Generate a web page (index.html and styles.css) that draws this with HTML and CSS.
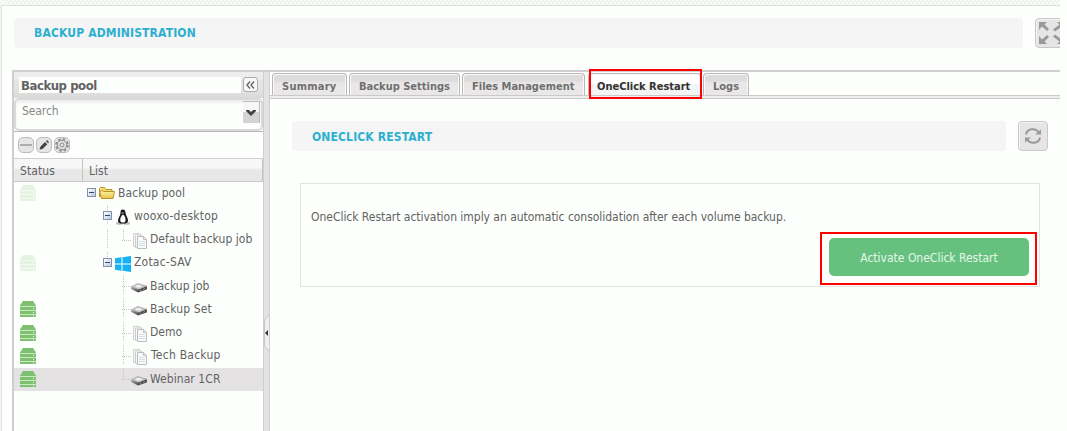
FILE: index.html
```html
<!DOCTYPE html>
<html lang="en">
<head>
<meta charset="utf-8">
<title>Backup administration</title>
<link rel="stylesheet" href="styles.css">
</head>
<body>
<svg class="defs" aria-hidden="true">
  <defs>
    <linearGradient id="fold" x2="0" y2="1"><stop offset="0" stop-color="#fff6a8"/><stop offset="1" stop-color="#e8c447"/></linearGradient>
    <linearGradient id="metal"><stop offset="0" stop-color="#aaa"/><stop offset=".45" stop-color="#555"/><stop offset="1" stop-color="#777"/></linearGradient>
  </defs>
  <symbol id="server" viewBox="0 0 16 16"><path fill="#7cc070" d="M3 0h10l3 4.500V16H0V4.500z"/><path stroke="#d5edcf" d="M0 5.500h16M0 9.500h16M0 13.500h16" stroke-width=".9"/><path fill="#f4fff0" d="M13 7h1v1h-1zM13 11h1v1h-1zM13 14.500h1v1h-1z"/></symbol>
  <symbol id="drive" viewBox="0 0 16 12"><path fill="url(#metal)" d="M0 5v2l7 3.500 9-3V4L9 7z"/><path fill="#c4c4c4" stroke="#9a9a9a" stroke-width=".6" d="M.5 4.800 6.500 1.500 15.500 4 8 7.800z"/><ellipse cx="7.500" cy="4.200" rx="3.200" ry="1.300" fill="#efefef"/><path fill="#444" d="m7 8 8.500-3.500V7L7 10z"/><path stroke="#aaa" d="m8.500 8.800 2-.9M12 7.300l2-.9" stroke-width=".8"/></symbol>
  <symbol id="pages" viewBox="0 0 16 16"><path fill="#f7f7f7" stroke="#d2d2d2" d="M1.500.5h6l2 2v11h-8z"/><path fill="#f7f7f7" stroke="#cdcdcd" d="M3.500 2h6l2 2v10.500h-8z"/><path fill="#f9f9f9" stroke="#bdbdbd" d="M5.500 3.500h6l3 3v9h-9z"/><path fill="none" stroke="#c0c0c0" d="M11.500 3.500v3h3"/><path stroke="#d2e2ed" d="M7 8.500h6M7 10.500h6M7 12.500h6"/></symbol>
</svg>
<main class="page">
  <header class="headline">
    <h1 class="title-bar title-main"><span class="t-admin">BACKUP ADMINISTRATION</span></h1>
    <button class="icon-button expand" aria-label="Expand"><svg width="26" height="22" viewBox="0 0 26 22"><path fill="#999" d="M0 0h8L5.500 2.500 10 7 8 9 3 4.500 0 8zM26 0h-8l2.500 2.500L14 7.500l2 2 6.500-5L26 8zM0 22h8l-2.500-2.500L10 15l-2-2-5 4.500L0 14zM26 22h-8l2.500-2.500-6.500-5 2-2 6.500 5L26 14z"/></svg></button>
  </header>
  <div class="workspace">
    <aside class="sidebar">
      <div class="side-head"><h2 class="side-title"><span class="t-pool">Backup pool</span></h2><button class="collapse" aria-label="Collapse"><svg width="9" height="8" viewBox="0 0 9 8"><path d="M4 .5 1 4l3 3.500M8 .5 5 4l3 3.500" fill="none" stroke="#666" stroke-width="1.400"/></svg></button></div>
      <div class="search"><span class="t-search">Search</span><button class="drop" aria-label="Show list"><svg width="10" height="6" viewBox="0 0 10 6"><path d="M0 0h3l2 2 2-2h3v1L5 6 0 1z" fill="#444"/></svg></button></div>
      <div class="tools">
        <button class="tool" aria-label="Remove"><svg width="12" height="12"><path d="M0 6h12" stroke="#888" stroke-width="1.200"/></svg></button>
        <button class="tool" aria-label="Edit"><svg width="12" height="12" viewBox="0 0 12 12"><path d="m1.500 10.500 1-3L7 3l2.300 2.300L4.500 10zM8 2l1-1 2 2.300-1 1z" fill="#444"/></svg></button>
        <button class="tool" aria-label="Settings"><svg width="14" height="14" viewBox="0 0 14 14"><g fill="none" stroke="#888"><circle cx="7" cy="7" r="6" stroke-width="1.500" stroke-dasharray="2.600 2.112"/><circle cx="7" cy="7" r="4.700"/><circle cx="7" cy="7" r="2"/></g></svg></button>
      </div>
      <div class="columns"><span class="col-status"><span class="t-status">Status</span></span><span class="col-list"><span class="t-list">List</span></span></div>
      <ul class="tree">
        <li class="row root"><svg class="server faded"><use href="#server"/></svg><i class="toggle"></i><svg class="folder" width="16" height="14" viewBox="0 0 16 14"><path d="M.5 11V2.500l1-1h4l1.500 2h6v2" fill="#f5dd78" stroke="#b8912a"/><path d="m2.500 12.500-2-7 3.500-1 .5 1h11l-1.500 7z" fill="url(#fold)" stroke="#b8912a"/></svg><span class="n-pool">Backup pool</span></li>
        <li class="row host top-host"><i class="toggle"></i><svg class="os" width="16" height="16" viewBox="0 0 16 16"><ellipse cx="4.500" cy="14.200" rx="3.500" ry="1.500" fill="#bbb"/><ellipse cx="11.500" cy="14.200" rx="3.500" ry="1.500" fill="#bbb"/><path d="M5.500 4C5.500 1.500 6 .5 7.800.5s2.700 1.200 2.700 3.500c0 2 2.500 4.500 2.500 7.500 0 2-1.500 2.500-2.500 3h-5c-1.500-.5-2.500-1-2.500-3C3 9 5.500 6.500 5.500 4z" fill="#171717"/><path d="M8 5.500C6.500 6.500 4.800 9 5.300 12c.5 2 4.700 2 5.200 0 .5-3-1-5.500-2.500-6.500z" fill="#fff"/><path d="M6.500 3.500h2v1h-2z" fill="#ddd"/></svg><span class="n-wooxo">wooxo-desktop</span></li>
        <li class="row job last"><svg class="pages"><use href="#pages"/></svg><span class="n-default">Default backup job</span></li>
        <li class="row host end-host"><svg class="server faded"><use href="#server"/></svg><i class="toggle"></i><svg class="os" width="16" height="16" viewBox="0 0 16 16"><path fill="#14b2f2" d="m0 2.200 6.500-.9v6.200H0zM7.500 1.200 16 0v7.500H7.500zM0 8.500h6.500v6.200L0 13.800zM7.500 8.500H16V16l-8.500-1.200z"/></svg><span class="n-zotac">Zotac-SAV</span></li>
        <li class="row job"><svg class="drive"><use href="#drive"/></svg><span class="n-job">Backup job</span></li>
        <li class="row job"><svg class="server"><use href="#server"/></svg><svg class="drive"><use href="#drive"/></svg><span class="n-set">Backup Set</span></li>
        <li class="row job"><svg class="server"><use href="#server"/></svg><svg class="pages"><use href="#pages"/></svg><span class="n-demo">Demo</span></li>
        <li class="row job"><svg class="server"><use href="#server"/></svg><svg class="pages"><use href="#pages"/></svg><span class="n-tech">Tech Backup</span></li>
        <li class="row job last selected"><svg class="server"><use href="#server"/></svg><svg class="drive"><use href="#drive"/></svg><span class="n-web">Webinar 1CR</span></li>
      </ul>
    </aside>
    <div class="splitter"><svg class="grip" width="5" height="36" viewBox="0 0 5 36"><path d="M5 0 .5 5v26L5 36" fill="#f0eff0" stroke="#cbc7c9"/><path d="m1 18 3-3v6z" fill="#333"/></svg></div>
    <section class="content">
      <nav class="tabs">
        <a class="tab tab-summary"><span class="t-summary">Summary</span></a>
        <a class="tab tab-settings"><span class="t-settings">Backup Settings</span></a>
        <a class="tab tab-files"><span class="t-files">Files Management</span></a>
        <a class="tab tab-restart active"><span class="t-restart">OneClick Restart</span><i class="mark mark-tab"></i></a>
        <a class="tab tab-logs"><span class="t-logs">Logs</span></a>
      </nav>
      <div class="tab-strip"></div>
      <header class="subhead">
        <h2 class="title-bar title-sub"><span class="t-one">ONECLICK RESTART</span></h2>
        <button class="icon-button" aria-label="Refresh"><svg width="18" height="18" viewBox="0 0 18 18"><g fill="none" stroke="#999" stroke-width="2"><path d="M2 7.500c1-6 9-7 12.500-2.500M16 10.500c-1 6-9 7-12.500 2.500"/></g><path fill="#999" d="M17 2.500v5h-6zM1 15.500v-5h6z"/></svg></button>
      </header>
      <div class="notice">
        <p class="message"><span class="t-message">OneClick Restart activation imply an automatic consolidation after each volume backup.</span></p>
        <button class="activate"><span class="t-activate">Activate OneClick Restart</span><i class="mark mark-action"></i></button>
      </div>
    </section>
  </div>
</main>
</body>
</html>
```
FILE: styles.css
```css
* { box-sizing: border-box; }
body { margin: 0; width: 1067px; height: 431px; overflow: hidden; background: #fdfffd; color: #626262; font: 12px/16px "DejaVu Sans Condensed", "DejaVu Sans", sans-serif; font-stretch: condensed; }
button { margin: 0; padding: 0; font: inherit; }
h1, h2, p, ul { margin: 0; padding: 0; font: inherit; }
span { white-space: nowrap; }
.defs { display: block; width: 0; height: 0; }
.page { width: 1060px; height: 431px; overflow: hidden; padding: 5px 0 0 1px; background: repeating-conic-gradient(#f0f2f0 0 25%, #fafcfa 0 50%) 0 0 / 4px 4px; }
.page::before { content: ""; display: block; height: 1px; background: #e2e2e2; }
.headline { display: flex; gap: 12px; width: 1060px; padding: 12px 0 0 12px; border-left: 1px solid #e2e2e2; background: #fdfffd; }
.title-bar { display: flex; align-items: center; height: 30px; padding-left: 20px; border-radius: 4px; background: #f4f5f4; color: #2dafd0; font-weight: bold; }
.title-main { width: 1009px; flex: none; }
.t-admin { letter-spacing: .15px; }
.t-one { letter-spacing: .15px; }
.title-sub .t-one { padding-top: 1px; }
.icon-button { display: flex; align-items: center; justify-content: center; flex: none; width: 30px; height: 30px; border: 1px solid #c9c8c9; border-radius: 4px; background: #e6e4e5; box-shadow: inset 1px 1px #f5f4f5; }
.expand { width: 34px; }
.workspace { display: flex; height: 383px; padding: 22px 0 0 10px; border-left: 1px solid #e2e2e2; background: #fdfffd; }
.sidebar { width: 251px; flex: none; border-top: 2px solid #d1cfd1; border-left: 2px solid #d0cdd0; }
.side-head { display: flex; gap: 2px; height: 26px; padding: 5px; background: linear-gradient(#ededed 0 30%, #e5e4e5 30% 60%, #dad9da); }
.side-title { display: flex; align-items: center; width: 222px; height: 16px; padding: 1px 0 0 2px; background: #fdfffd; font-size: 13px; font-weight: bold; letter-spacing: -.45px; }
.collapse { display: grid; place-items: center; width: 15px; height: 15px; border: 1px solid #aaa; border-radius: 3px; background: #f8f8f8; }
.search { display: flex; justify-content: space-between; height: 33px; padding: 1px 1px 0 6px; border: 2px solid #d9d9d9; border-radius: 5px; background: #fdfffd; color: #888; box-shadow: inset 0 3px 3px #eee; }
.t-search { padding-top: 2px; letter-spacing: -.1px; }
.drop { display: grid; place-items: center; width: 17px; height: 22px; border: solid #bbb; border-width: 1px 1px 0 0; background: linear-gradient(#f7f7f7 0 45%, #d6d3d5 50%); }
.tools { display: flex; gap: 2px; height: 28px; padding: 5px 4px; border-top: 1px solid #b8b8b8; border-bottom: 1px solid #d0d0d0; }
.tool { display: grid; place-items: center; width: 16px; height: 16px; border: 1px solid #bbb; border-radius: 5px; background: #e6e4e5; }
.columns { display: flex; height: 23px; line-height: 24px; border-bottom: 1px solid #c8c8c8; background: linear-gradient(#f6f7f6 0 40%, #e9e8e9 50%); }
.col-status { width: 69px; padding-left: 6px; border-right: 1px solid #c3c3c3; }
.col-list { flex: 1; padding-left: 6px; border-right: 1px solid #c3c3c3; }
.t-status { letter-spacing: .1px; }
.tree { list-style: none; }
.row { display: grid; grid-template-columns: 73px 12px 16px 1fr; align-items: center; height: 23.250px; }
.row > span { grid-column: 4; grid-row: 1; padding: 0 0 2px 2px; }
.row > svg, .row > .toggle { grid-row: 1; }
.host { grid-template-columns: 89px 12px 16px 1fr; }
.job { grid-template-columns: 108px 10px 16px 1fr; }
.root > span, .host > span { padding-left: 3px; }
.n-pool { letter-spacing: .1px; }
.n-wooxo { letter-spacing: .2px; }
.n-default { letter-spacing: .03px; }
.n-zotac { letter-spacing: .2px; }
.n-set { letter-spacing: .12px; }
.row > .n-tech { padding-left: 3px; letter-spacing: .25px; }
.n-web { letter-spacing: .07px; }
.row > .server { grid-column: 1; width: 16px; height: 16px; margin: -1px 0 0 6px; }
.faded { opacity: .18; }
.toggle { grid-column: 2; width: 9px; height: 9px; margin-top: -2px; border: 1px solid #8292b0; background: linear-gradient(#30486f, #30486f) center / 5px 1px no-repeat, linear-gradient(135deg, #fff, #bdc8dc); }
.folder, .os { grid-column: 3; }
.folder { margin-top: -1px; }
.os { margin-top: 1px; }
.job::before { content: ""; grid-column: 2; grid-row: 1; height: 1px; background: repeating-linear-gradient(90deg, #c5c5c5 0 1px, transparent 1px 2px); }
.job { background: repeating-linear-gradient(#c5c5c5 0 1px, transparent 1px 2px) 109px 0 / 1px 19px no-repeat; }
.last { background-size: 1px 11px; }
.top-host { background: repeating-linear-gradient(#c5c5c5 0 1px, transparent 1px 2px) 93px 0 / 1px 19px no-repeat; }
.top-host + .last { background: repeating-linear-gradient(#c5c5c5 0 1px, transparent 1px 2px) 93px 0 / 1px 19px no-repeat, repeating-linear-gradient(#c5c5c5 0 1px, transparent 1px 2px) 109px 0 / 1px 11px no-repeat; }
.end-host { background: repeating-linear-gradient(#c5c5c5 0 1px, transparent 1px 2px) 93px 0 / 1px 11px no-repeat; }
.pages, .drive { grid-column: 3; width: 16px; height: 16px; }
.pages { margin-top: 1px; }
.drive { width: 18px; height: 12px; margin: 3px 0 0 -2px; }
.selected { background-color: #e5e2e4; }
.splitter { display: flex; align-items: flex-start; justify-content: flex-end; width: 7px; flex: none; padding-top: 243px; border: solid #d0cdd0; border-width: 2px 1px 0; background: #e5e2e4; }
.content { flex: 1; min-width: 0; border-top: 2px solid #d1cfd1; }
.tabs { display: flex; gap: 2px; height: 23px; padding: 1px 0 0 2px; }
.tab { position: relative; display: flex; align-items: center; height: 22px; padding: 4px 0 0 9px; flex: none; border: 1px solid #b9b7b8; border-bottom: 0; border-radius: 4px 4px 0 0; background: linear-gradient(#dddbdc 0 30%, #e9e7e8 45%); color: #6f6f6f; font-size: 11px; font-weight: bold; box-shadow: inset 1px 1px #fafafa, inset -1px 0 #fafafa; }
.tab-summary { width: 75px; }
.t-summary { letter-spacing: .25px; }
.tab-settings { width: 111px; }
.tab-files { width: 123px; }
.tab-restart { width: 113px; margin-left: 1px; padding-left: 8px; }
.tab-logs { width: 46px; }
.active { background: linear-gradient(#fff 0 45%, #f4f4f4 50%); color: #333; }
.tab-strip { height: 4px; border: solid #cbc9ca; border-width: 1px 0; background: #eeedee; }
.mark { position: absolute; border: 2px solid #fd0000; }
.mark-tab { left: 0; top: -5px; width: 113px; height: 30px; }
.subhead { display: flex; gap: 12px; padding: 22px 0 0 22px; }
.title-sub { width: 714px; }
.notice { display: flex; flex-direction: column; width: 740px; height: 104px; margin: 32px 0 0 30px; padding: 25px 10px 10px; border: 1px solid #e2e1e2; }
.message { height: 29px; }
.t-message { letter-spacing: -.03px; }
.activate { position: relative; align-self: flex-end; width: 200px; height: 38px; padding-top: 2px; border: 0; border-radius: 5px; background: #66c17f; color: #e5f7e9; }
.mark-action { left: -9px; top: -6px; width: 217px; height: 53px; }
```
